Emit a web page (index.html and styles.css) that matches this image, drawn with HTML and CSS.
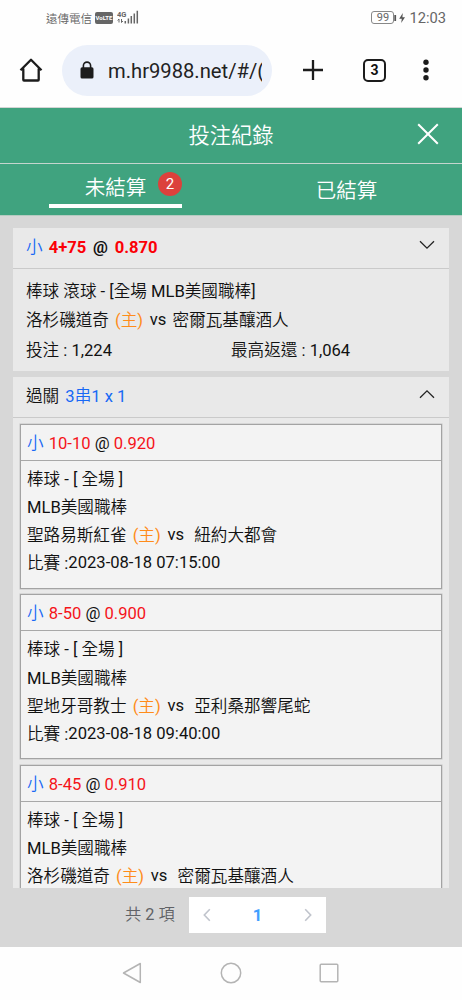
FILE: index.html
```html
<!DOCTYPE html>
<html lang="zh-Hant">
<head>
    <meta charset="utf-8">
    <title>投注紀錄</title>
    <link rel="stylesheet" href="styles.css">
</head>
<body>
    <div class="status">
        <span class="carrier">遠傳電信</span>
        <span class="volte">VoLTE</span>
        <svg class="signal" width="22" height="15" viewBox="0 0 22 15">
            <text x="0" y="6.5" font-size="7.5" font-weight="700" fill="#666">4G</text>
            <path d="M2 9v3.5M.6 10.4 2 9M4.5 9v3.5M4.5 12.5 5.9 11" stroke="#666" fill="none"/>
            <path d="M8.3 11v2.5M11.4 8.5v5M14.3 6v7.5M17.3 3.5v10M20.3 .8v12.7" stroke="#666" stroke-width="1.5" fill="none"/>
        </svg>
        <span class="battery">99</span>
        <svg class="charge" width="12" height="12" viewBox="0 0 12 12">
            <path d="M1.2 3v6" stroke="#555" stroke-width="1.8"/>
            <path d="M8.8 1 5.2 6.8h2.6L7.2 11l3.8-5.8H8.4z" fill="#555"/>
        </svg>
        <span class="clock">12:03</span>
    </div>

    <div class="browser">
        <svg class="home" width="26" height="26" viewBox="0 0 26 26">
            <path d="M2.5 13.2 13 2.7l10.5 10.5M5.3 11.5v11.3q0 .7.7.7h14q.7 0 .7-.7V11.5" fill="none" stroke="#1c1c1c" stroke-width="2.3" stroke-linejoin="round"/>
        </svg>
        <div class="url">
            <svg width="14" height="18" viewBox="0 0 14 18">
                <path d="M3.4 7V4.7a3.6 3.6 0 0 1 7.2 0V7" fill="none" stroke="#1c1c1c" stroke-width="1.6"/>
                <rect x=".5" y="6.3" width="13" height="11.2" rx="1.6" fill="#1c1c1c"/>
            </svg>
            <span class="address">m.hr9988.net/#/(</span>
        </div>
        <svg class="plus" width="22" height="22" viewBox="0 0 22 22">
            <path d="M11 1v20M1 11h20" stroke="#1c1c1c" stroke-width="2.3"/>
        </svg>
        <span class="count">3</span>
        <svg class="more" width="8" height="22" viewBox="0 0 8 22">
            <g fill="#1c1c1c"><circle cx="4" cy="3.3" r="2.7"/><circle cx="4" cy="11" r="2.7"/><circle cx="4" cy="18.7" r="2.7"/></g>
        </svg>
    </div>

    <div class="title">
        <span>投注紀錄</span>
        <svg class="close" width="22" height="22" viewBox="0 0 22 22">
            <path d="M1.2 1.2l19.6 19.6M20.8 1.2 1.2 20.8" stroke="#fff" stroke-width="2"/>
        </svg>
    </div>
    <div class="tabs">
        <div class="tab">
            <div class="tab_on">未結算<span class="badge">2</span></div>
        </div>
        <div class="tab">已結算</div>
    </div>

    <div class="list">
        <div class="card single">
            <div class="card_head">
                <span><span class="blue">小</span> <b class="bet"><span class="red">4+75</span> @ <span class="red">0.870</span></b></span>
                <svg width="16" height="10" viewBox="0 0 16 10"><path d="M1 1.2l7 7 7-7" fill="none" stroke="#222" stroke-width="1.3"/></svg>
            </div>
            <div class="card_body">
                <div>棒球 滾球 - [全場 MLB美國職棒]</div>
                <div>洛杉磯道奇 <span class="host">(主)</span> <span class="vs">vs</span> 密爾瓦基釀酒人</div>
                <div class="money"><span>投注 : 1,224</span><span>最高返還 : 1,064</span></div>
            </div>
        </div>
        <div class="card">
            <div class="card_head">
                <span>過關 <span class="blue combo">3串1 x 1</span></span>
                <svg width="16" height="10" viewBox="0 0 16 10"><path d="M1 8.8l7-7 7 7" fill="none" stroke="#222" stroke-width="1.3"/></svg>
            </div>
            <div class="games">
                <div class="game">
                    <div class="game_head"><span class="blue">小</span> <span class="red">10-10</span> @ <span class="red">0.920</span></div>
                    <div class="game_body">
                        <div>棒球 - [ 全場 ]</div>
                        <div>MLB美國職棒</div>
                        <div>聖路易斯紅雀 <span class="host">(主)</span> <span class="vs">vs</span>&nbsp; 紐約大都會</div>
                        <div>比賽 :<span class="date">2023-08-18 07:15:00</span></div>
                    </div>
                </div>
                <div class="game">
                    <div class="game_head"><span class="blue">小</span> <span class="red">8-50</span> @ <span class="red">0.900</span></div>
                    <div class="game_body">
                        <div>棒球 - [ 全場 ]</div>
                        <div>MLB美國職棒</div>
                        <div>聖地牙哥教士 <span class="host">(主)</span> <span class="vs">vs</span>&nbsp; 亞利桑那響尾蛇</div>
                        <div>比賽 :<span class="date">2023-08-18 09:40:00</span></div>
                    </div>
                </div>
                <div class="game">
                    <div class="game_head"><span class="blue">小</span> <span class="red">8-45</span> @ <span class="red">0.910</span></div>
                    <div class="game_body">
                        <div>棒球 - [ 全場 ]</div>
                        <div>MLB美國職棒</div>
                        <div>洛杉磯道奇 <span class="host">(主)</span> <span class="vs">vs</span>&nbsp; 密爾瓦基釀酒人</div>
                    </div>
                </div>
            </div>
        </div>
    </div>

    <div class="pager">
        <span class="total">共 2 項</span>
        <div class="pages">
            <svg width="8" height="14" viewBox="0 0 8 14"><path d="M6.8 1.2 1.3 7l5.5 5.8" fill="none" stroke="#c0c4cc" stroke-width="1.6"/></svg>
            <b>1</b>
            <svg width="8" height="14" viewBox="0 0 8 14"><path d="M1.2 1.2 6.7 7l-5.5 5.8" fill="none" stroke="#c0c4cc" stroke-width="1.6"/></svg>
        </div>
    </div>

    <div class="navbar">
        <svg width="20" height="22" viewBox="0 0 20 22"><path d="M18.3 1.5v19L1.5 11z" fill="none" stroke="#b4b4b4" stroke-width="1.5" stroke-linejoin="round"/></svg>
        <svg width="22" height="22" viewBox="0 0 22 22"><circle cx="11" cy="11" r="9.7" fill="none" stroke="#b4b4b4" stroke-width="1.5"/></svg>
        <svg width="20" height="20" viewBox="0 0 20 20"><rect x="1.2" y="1.2" width="17.6" height="17.6" rx="1" fill="none" stroke="#b4b4b4" stroke-width="1.5"/></svg>
    </div>
</body>
</html>
```
FILE: styles.css
```css
* {
    box-sizing: border-box;
}

body {
    margin: 0;
    height: 1000px;
    overflow: hidden;
    display: flex;
    flex-direction: column;
    background: #fefefe;
    color: #111;
    font-family: Roboto, "Noto Sans CJK TC DemiLight", "Noto Sans CJK TC Light", "Noto Sans CJK TC", sans-serif;
    font-size: 16.6px;
}

svg {
    display: block;
    flex: none;
}

.status {
    height: 36px;
    display: flex;
    align-items: center;
    padding: 0 16px 0 46px;
    color: #666;
    font-size: 11.5px;
}

.volte {
    margin-left: 3px;
    width: 18px;
    height: 12px;
    border-radius: 2px;
    background: #666;
    color: #fff;
    font-size: 6px;
    font-weight: bold;
    line-height: 12px;
    text-align: center;
}

.signal {
    margin-left: 4px;
}

.battery {
    margin-left: auto;
    width: 23px;
    height: 13px;
    border: 1px solid #888;
    border-radius: 3px;
    font-size: 11px;
    line-height: 11px;
    text-align: center;
}

.clock {
    margin-left: 3px;
    font-size: 14.7px;
}

.browser {
    height: 72px;
    display: flex;
    align-items: center;
    padding: 0 32px 2px 18px;
    border-bottom: 1px solid #d5d5d5;
}

.url {
    margin-left: 18px;
    width: 210px;
    height: 51px;
    border-radius: 26px;
    background: #ebf0fa;
    display: flex;
    align-items: center;
    padding-left: 18px;
}

.address {
    margin-left: 14px;
    width: 154px;
    overflow: hidden;
    white-space: nowrap;
    font-size: 20.2px;
    line-height: 28px;
    padding-top: 2px;
    color: #222;
}

.plus {
    margin-left: 30px;
}

.count {
    margin-left: 39px;
    width: 23px;
    height: 23px;
    border: 2px solid #1c1c1c;
    border-radius: 5px;
    font-size: 14px;
    font-weight: bold;
    line-height: 19px;
    text-align: center;
}

.more {
    margin-left: auto;
}

.title {
    height: 55px;
    display: flex;
    align-items: center;
    justify-content: center;
    padding-bottom: 3px;
    background: #40a37f;
    color: #fff;
    font-size: 21.3px;
    position: relative;
}

.close {
    position: absolute;
    right: 23px;
    top: 15px;
}

.tabs {
    height: 53px;
    display: flex;
    border-top: 1px solid #c5d5ce;
    border-bottom: 1px solid #b5cbc1;
    background: #40a37f;
    color: #fff;
    font-size: 20.5px;
}

.tab {
    flex: 1;
    text-align: center;
    line-height: 55px;
}

.tab_on {
    position: relative;
    margin-left: 49px;
    width: 133px;
    height: 44px;
    border-bottom: 4px solid #fff;
    line-height: 48px;
}

.badge {
    position: absolute;
    right: 0;
    top: 8px;
    width: 24px;
    height: 24px;
    border-radius: 50%;
    background: #dc413c;
    font-size: 15px;
    line-height: 24px;
}

.list {
    height: 673px;
    overflow: hidden;
    padding: 12px 13px 0;
    background: #d7d7d7;
}

.card {
    background: #e9e9e9;
    margin-bottom: 6px;
}

.single {
    height: 143px;
}

.card_head {
    height: 41px;
    display: flex;
    justify-content: space-between;
    padding: 0 14px 0 13px;
    border-bottom: 1px solid #cacaca;
    line-height: 40px;
}

.card_head svg {
    margin-top: 12px;
}

.card_body {
    padding: 8px 13px;
    line-height: 29.5px;
}

.bet {
    margin-left: 2px;
    word-spacing: 2.6px;
}

.blue {
    color: #1768f5;
}

.combo {
    margin-left: 2px;
}

.red {
    color: #f5141a;
}

.bet .red {
    color: #fb0006;
}

.host {
    margin: 0 2.5px 0 2px;
    color: #ff8c1a;
}

.vs {
    position: relative;
    top: -1px;
    margin-right: 2px;
}

.money {
    display: flex;
}

.money span {
    width: 205px;
}

.games {
    padding: 6px 7px;
}

.game {
    height: 165px;
    margin-bottom: 5.6px;
    border: 1px solid #a3a3a3;
    background: #f3f3f3;
    box-shadow: 0 0 0 .5px #c4c4c4;
}

.game_head {
    height: 36px;
    padding-left: 6px;
    border-bottom: 1px solid #a8a8a8;
    line-height: 37px;
}

.game_head .blue {
    margin-right: 1px;
}

.game_body {
    padding: 5px 6px;
    line-height: 28.2px;
}

.game_body div {
    height: 28.2px;
}

.date {
    position: relative;
    top: -1px;
}

.pager {
    height: 59px;
    display: flex;
    padding: 9px 0 0 125px;
    background: #d7d7d7;
}

.total {
    width: 64px;
    color: #606266;
    font-size: 16.3px;
    line-height: 36px;
}

.pages {
    width: 137px;
    height: 36px;
    display: flex;
    align-items: center;
    justify-content: space-between;
    padding: 0 14px;
    background: #fff;
    color: #409eff;
}

.navbar {
    height: 53px;
    display: flex;
    align-items: center;
    justify-content: space-between;
    padding: 0 123px 2px 122px;
}
```
